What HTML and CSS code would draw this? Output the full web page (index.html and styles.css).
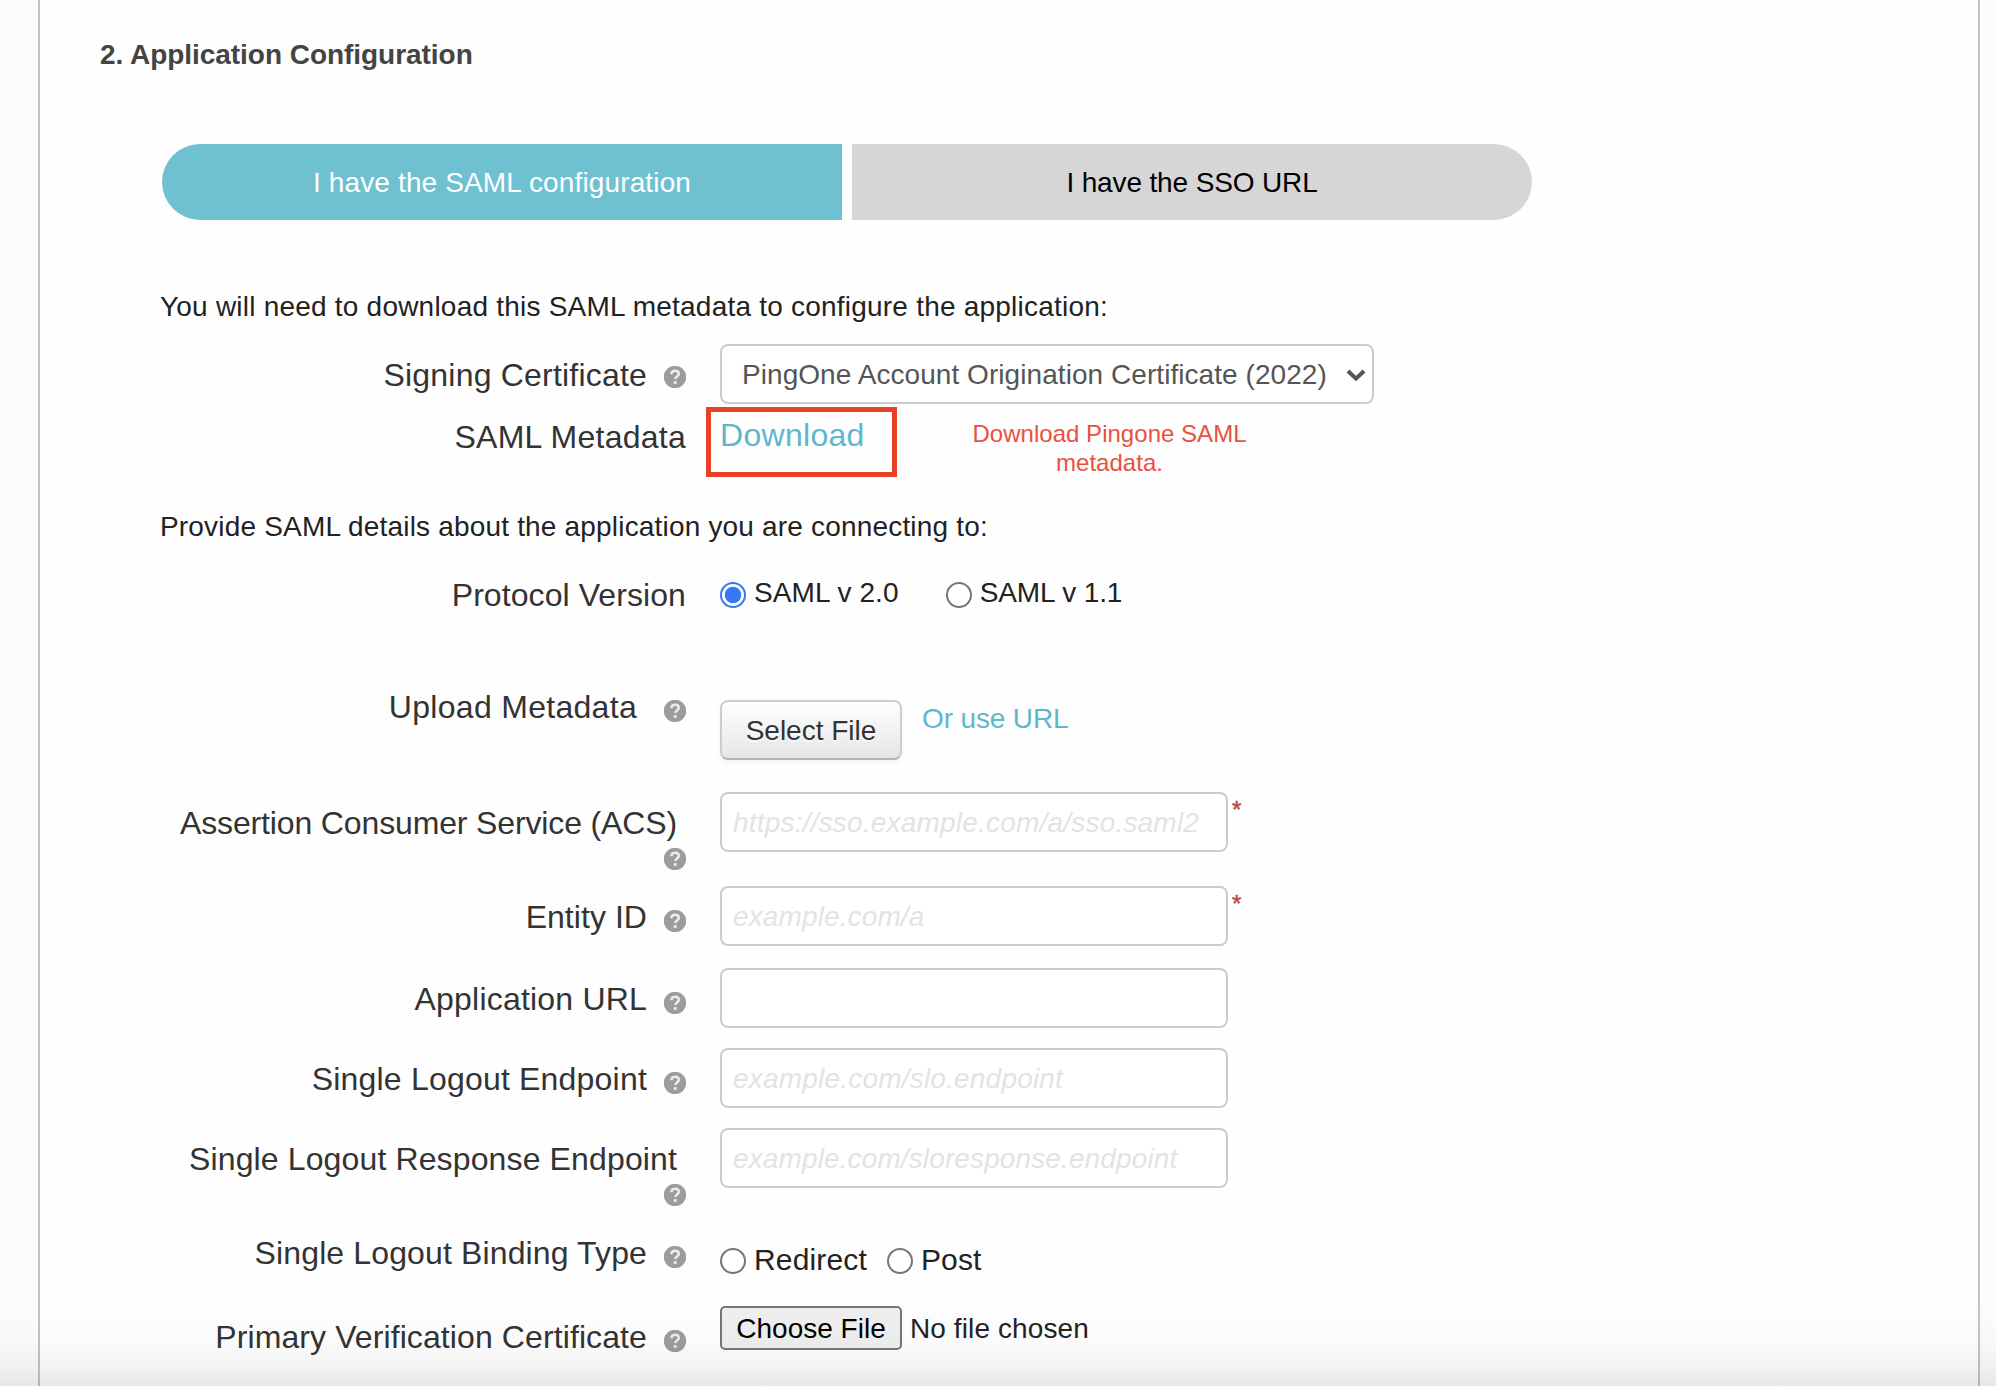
FILE: index.html
```html
<!DOCTYPE html>
<html lang="en">
<head>
<meta charset="utf-8">
<title>Application Configuration</title>
<link rel="stylesheet" href="styles.css">
</head>
<body>
<svg class="defs" aria-hidden="true">
  <symbol id="help" viewBox="0 0 22 22">
    <circle cx="11" cy="11" r="11.2" fill="#9c9c9a"/>
    <path d="M7.4 8.3C7.4 5.8 9 4.8 11.2 4.8C13.4 4.8 14.8 6 14.8 7.9C14.8 10.2 11.4 10.2 11.2 13.2" fill="none" stroke="#ececec" stroke-width="2.5"/>
    <rect x="9.7" y="15.2" width="3" height="2.6" fill="#ececec"/>
  </symbol>
</svg>
<main class="panel">
  <h2 class="title">2. Application Configuration</h2>
  <div class="tabs">
    <button class="tab tab-active">I have the SAML configuration</button>
    <button class="tab tab-sso">I have the SSO URL</button>
  </div>
  <p class="intro intro-download">You will need to download this SAML metadata to configure the application:</p>

  <div class="row row-signing">
    <div class="label"><span>Signing Certificate</span><svg class="help"><use href="#help"/></svg></div>
    <div class="control">
      <div class="select-wrap">
        <select class="select"><option>PingOne Account Origination Certificate (2022)</option></select>
        <svg class="chevron" viewBox="0 0 20 14"><path d="M2 3L10 10.6L18 3" fill="none" stroke="#555" stroke-width="4"/></svg>
      </div>
    </div>
  </div>
  <div class="row row-metadata">
    <div class="label"><span>SAML Metadata</span></div>
    <div class="control">
      <a class="download">Download</a>
      <p class="note">Download Pingone SAML<br>metadata.</p>
      <span class="highlight"></span>
    </div>
  </div>

  <p class="intro intro-provide">Provide SAML details about the application you are connecting to:</p>

  <div class="row row-protocol">
    <div class="label"><span>Protocol Version</span></div>
    <div class="control">
      <label class="choice"><input class="radio" type="radio" name="version" checked><span>SAML v 2.0</span></label>
      <label class="choice choice-old"><input class="radio" type="radio" name="version"><span>SAML v 1.1</span></label>
    </div>
  </div>
  <div class="row row-upload">
    <div class="label"><span>Upload Metadata</span><svg class="help"><use href="#help"/></svg></div>
    <div class="control">
      <button class="select-file">Select File</button>
      <a class="use-url">Or use URL</a>
    </div>
  </div>
  <div class="row row-acs">
    <div class="label label-stacked"><span>Assertion Consumer Service (ACS)</span><svg class="help"><use href="#help"/></svg></div>
    <div class="control"><input class="field field-acs" placeholder="https://sso.example.com/a/sso.saml2"><span class="required">*</span></div>
  </div>
  <div class="row row-entity">
    <div class="label"><span>Entity ID</span><svg class="help"><use href="#help"/></svg></div>
    <div class="control"><input class="field" placeholder="example.com/a"><span class="required">*</span></div>
  </div>
  <div class="row row-url">
    <div class="label"><span>Application URL</span><svg class="help"><use href="#help"/></svg></div>
    <div class="control"><input class="field"></div>
  </div>
  <div class="row row-url">
    <div class="label"><span>Single Logout Endpoint</span><svg class="help"><use href="#help"/></svg></div>
    <div class="control"><input class="field field-slo" placeholder="example.com/slo.endpoint"></div>
  </div>
  <div class="row row-response">
    <div class="label label-stacked"><span>Single Logout Response Endpoint</span><svg class="help"><use href="#help"/></svg></div>
    <div class="control"><input class="field" placeholder="example.com/sloresponse.endpoint"></div>
  </div>
  <div class="row row-binding">
    <div class="label"><span>Single Logout Binding Type</span><svg class="help"><use href="#help"/></svg></div>
    <div class="control">
      <label class="choice"><input class="radio" type="radio" name="binding"><span>Redirect</span></label>
      <label class="choice choice-post"><input class="radio" type="radio" name="binding"><span>Post</span></label>
    </div>
  </div>
  <div class="row row-cert">
    <div class="label"><span>Primary Verification Certificate</span><svg class="help"><use href="#help"/></svg></div>
    <div class="control"><button class="choose-file">Choose File</button><span class="file-name">No file chosen</span></div>
  </div>
</main>
<div class="fade"></div>
</body>
</html>
```
FILE: styles.css
```css
* { box-sizing: border-box; }
body {
  margin: 0;
  height: 1386px;
  overflow: hidden;
  position: relative;
  background: #fcfcfc;
  color: #222;
  font: 28px/40px "Liberation Sans", Arial, sans-serif;
}
button, input, select { font: inherit; margin: 0; padding: 0; }
.defs { position: absolute; width: 0; height: 0; }
.panel {
  height: 1386px;
  margin: 0 16px 0 38px;
  border: solid #c4c4c4;
  border-width: 0 2px;
  background: #fefefe;
}
.title {
  margin: 0;
  padding: 35px 0 0 60px;
  height: 144px;
  font-size: 28px;
  font-weight: bold;
  letter-spacing: -.04px;
  color: #444;
}

.tabs {
  display: flex;
  gap: 10px;
  width: 1370px;
  height: 76px;
  margin-left: 122px;
}
.tab {
  flex: 1;
  border: 0;
  padding-top: 2px;
  border-radius: 0 38px 38px 0;
  background: #d6d6d6;
  color: #000;
}
.tab-active {
  border-radius: 38px 0 0 38px;
  background: #6fc1d2;
  color: #fff;
  letter-spacing: .14px;
}
.tab-sso { letter-spacing: -.136px; }

.intro { margin: 0 0 0 120px; }
.intro-download { padding-top: 67px; height: 124px; letter-spacing: .218px; }
.intro-provide { padding-top: 1px; height: 40px; letter-spacing: .181px; }

.row {
  display: grid;
  grid-template-columns: 646px 1fr;
  column-gap: 34px;
}
.label {
  display: flex;
  justify-content: flex-end;
  align-items: flex-start;
  padding-top: 11px;
  font-size: 32px;
  letter-spacing: .2px;
  color: #333;
}
.help { flex: none; width: 22px; height: 22px; margin: 13px 0 0 17px; }
.label-stacked { flex-direction: column; align-items: flex-end; justify-content: flex-start; }
.label-stacked span { margin-right: 9px; letter-spacing: .132px; }
.label-stacked .help { margin-top: 5px; }
.control { display: flex; align-items: flex-start; position: relative; }

.row-signing { height: 60px; }
.row-signing .label { padding-top: 11px; }
.row-signing .help { margin-top: 11px; }
.row-metadata { height: 102px; }
.row-metadata .label { padding-top: 13px; letter-spacing: .25px; }
.row-protocol { height: 134px; }
.row-protocol .label { padding-top: 29px; letter-spacing: .08px; }
.row-protocol .control { padding-top: 26px; }
.row-upload { height: 112px; }
.row-upload .label { padding-top: 7px; letter-spacing: .3px; }
.row-upload .help { margin-left: 27px; }
.row-acs { height: 94px; }
.row-acs .label span { letter-spacing: -.14px; }
.row-entity { height: 82px; }
.row-entity .label { letter-spacing: .05px; }
.row-url { height: 80px; }
.row-response { height: 92px; }
.row-binding { height: 86px; }
.row-binding .label { padding-top: 13px; letter-spacing: .13px; }
.row-binding .control { padding-top: 19px; font-size: 30px; }
.row-cert { height: 80px; }
.row-cert .label { letter-spacing: .1px; }

.select-wrap { position: relative; width: 654px; height: 60px; }
.select {
  appearance: none;
  width: 100%;
  height: 60px;
  padding: 2px 0 0 20px;
  border: 2px solid #ccc;
  border-radius: 8px;
  background: #fff;
  color: #555;
  letter-spacing: .06px;
}
.chevron { position: absolute; right: 8px; top: 24px; width: 20px; height: 14px; }

.download { width: 252px; padding-top: 11px; font-size: 32px; letter-spacing: .3px; color: #5fb7ca; }
.note { width: 275px; margin: 15px 0 0; font-size: 24px; line-height: 29px; letter-spacing: .03px; text-align: center; color: #ea5040; }
.highlight { position: absolute; left: -14px; top: 3px; width: 191px; height: 70px; border: 5px solid #e94127; }

.choice { display: flex; align-items: flex-start; }
.choice span { padding-top: 1px; margin-left: 8px; letter-spacing: .094px; }
.choice-old { margin-left: 47px; }
.choice-old span { margin-left: 8px; letter-spacing: -.1px; }
.choice-post { margin-left: 20px; }
.row-binding .choice span { margin-left: 8px; letter-spacing: .15px; }
.radio {
  appearance: none;
  width: 26px;
  height: 26px;
  margin-top: 10px;
  border: 2px solid #767676;
  border-radius: 50%;
  background: #fff;
}
.row-binding .radio { margin-top: 9px; }
.radio:checked {
  border-color: #3478f6;
  background: radial-gradient(circle, #3478f6 7.8px, #fff 8.6px);
}

.select-file {
  width: 182px;
  height: 60px;
  margin-top: 20px;
  padding-top: 2px;
  border: 2px solid #ccc;
  border-bottom-color: #b3b3b3;
  border-radius: 8px;
  background: linear-gradient(#fff, #e6e6e6);
  box-shadow: 0 2px 4px rgba(0, 0, 0, .05);
  color: #333;
  text-shadow: 0 2px 2px rgba(255, 255, 255, .75);
}
.use-url { margin: 19px 0 0 20px; letter-spacing: -.139px; color: #5fb7ca; }

.field {
  width: 508px;
  height: 60px;
  padding: 2px 0 0 11px;
  border: 2px solid #ccc;
  border-radius: 8px;
  background: #fff;
  letter-spacing: .12px;
}
.field-acs, .field-slo { letter-spacing: .2px; }
.field::placeholder { color: #e3e3e3; font-style: italic; opacity: 1; }
.required { margin: 0 0 0 4px; font-size: 24px; line-height: 36px; color: #b94a48; -webkit-text-stroke: .5px #b94a48; }

.choose-file {
  width: 182px;
  height: 44px;
  padding-top: 1px;
  border: 2px solid #767676;
  border-radius: 5px;
  background: #efefef;
  color: #000;
}
.file-name { margin: 3px 0 0 8px; letter-spacing: .1px; }

.fade {
  position: absolute;
  left: 0;
  right: 0;
  bottom: 0;
  height: 86px;
  pointer-events: none;
  background: linear-gradient(rgba(0, 0, 0, 0), rgba(0, 0, 0, .015) 50%, rgba(0, 0, 0, .045) 75%, rgba(0, 0, 0, .085));
}
```
